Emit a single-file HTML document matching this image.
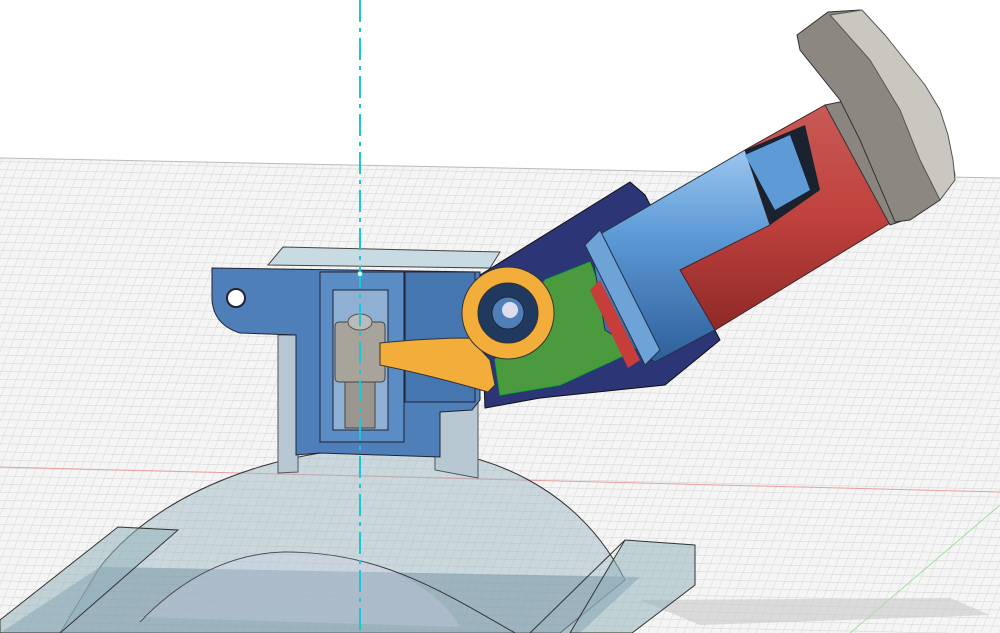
<!DOCTYPE html>
<html><head><style>
html,body{margin:0;padding:0;background:#fff;}
svg{display:block}
</style></head><body>
<svg width="1000" height="633" viewBox="0 0 1000 633" xmlns="http://www.w3.org/2000/svg">
<defs>
<pattern id="g" width="9" height="8" patternUnits="userSpaceOnUse" patternTransform="skewX(-20) rotate(1.2)">
<rect width="9" height="8" fill="#f5f5f5"/>
<path d="M0 0H9M0 0V8" stroke="#d4d4d4" stroke-width="1"/>
</pattern>
<linearGradient id="blue" x1="0" y1="0" x2="0" y2="1">
<stop offset="0" stop-color="#9cc6ee"/><stop offset="0.4" stop-color="#5d9ad6"/><stop offset="1" stop-color="#2f5f9a"/>
</linearGradient>
<linearGradient id="red" x1="0" y1="0" x2="0" y2="1">
<stop offset="0" stop-color="#c85a55"/><stop offset="0.5" stop-color="#c0413d"/><stop offset="1" stop-color="#8e2a28"/>
</linearGradient>
</defs>
<polygon points="0,158 1000,178 1000,633 0,633" fill="url(#g)"/>
<line x1="0" y1="158" x2="1000" y2="178" stroke="#bbb"/>
<line x1="0" y1="467" x2="1000" y2="492" stroke="#e8a0a0" stroke-width="1"/>
<line x1="850" y1="633" x2="1000" y2="505" stroke="#9fe09f" stroke-width="1"/>
<polygon points="640,600 950,598 990,615 700,625" fill="#c8c8c8" opacity="0.6"/>
<!-- dome -->
<path d="M100,567 C160,490 280,448 390,447 C490,447 580,490 625,580 L560,633 L60,633 Z" fill="rgba(150,180,190,0.45)" stroke="#333" stroke-width="1"/>
<!-- plate surface -->
<polygon points="0,633 100,567 640,577 580,633" fill="rgba(120,150,165,0.55)"/>
<path d="M140,622 C190,570 240,553 285,552 C380,552 440,590 515,633" fill="none" stroke="#333"/>
<path d="M140,622 C190,570 240,553 285,552 C380,552 440,590 460,627 L140,617Z" fill="rgba(200,205,225,0.35)"/>
<!-- slabs -->
<polygon points="0,620 118,527 178,530 75,620 60,633 0,633" fill="rgba(150,180,190,0.55)" stroke="#333"/>
<polygon points="625,540 695,545 695,585 632,633 570,633" fill="rgba(150,180,190,0.55)" stroke="#333"/>
<line x1="625" y1="540" x2="530" y2="633" stroke="#333"/>
<!-- housing translucent back -->
<polygon points="278,335 298,335 298,472 278,473" fill="#b7c8d3" stroke="#555"/>
<polygon points="435,405 478,400 478,478 435,470" fill="#b7c8d3" stroke="#555"/>
<polygon points="283,247 500,252 490,268 268,265" fill="#c8dbe3" stroke="#444"/>
<!-- blue housing -->
<path d="M212,268 L480,272 L480,400 L472,410 L440,412 L440,457 L320,453 L296,455 L296,335 L240,333 Q214,325 212,300Z" fill="#4f7fb8" stroke="#223" stroke-width="1"/>
<circle cx="236" cy="298" r="9" fill="#fff" stroke="#223" stroke-width="2"/>
<rect x="320" y="272" width="84" height="170" fill="#5a8cc6" stroke="#223"/>
<rect x="333" y="290" width="55" height="140" fill="#8fb0d2" stroke="#223"/>
<rect x="405" y="272" width="70" height="130" fill="#4576b0" stroke="#223"/>
<rect x="345" y="380" width="30" height="48" fill="#9a958e" stroke="#444"/>
<rect x="335" y="322" width="50" height="60" rx="4" fill="#a8a39b" stroke="#444"/>
<ellipse cx="360" cy="322" rx="12" ry="8" fill="#bbb" stroke="#555"/>
<!-- navy bracket -->
<polygon points="480,275 630,182 645,195 720,340 665,385 540,398 485,408" fill="#2c3576" stroke="#111"/>
<polygon points="545,280 590,262 625,355 560,385 500,395 495,360" fill="#4b9a3d" stroke="#1a3"/>
<!-- orange lever -->
<path d="M380,343 Q430,338 470,338 L490,360 L495,385 L488,392 Q430,375 380,365Z" fill="#f2ad3a" stroke="#333"/>
<circle cx="508" cy="313" r="46" fill="#f2ad3a" stroke="#333"/>
<circle cx="508" cy="313" r="30" fill="#1f3a5e" stroke="#333"/>
<circle cx="508" cy="313" r="16" fill="#4f7fb8" stroke="#223"/>
<circle cx="510" cy="310" r="8" fill="#dde" />
<!-- blue cylinder -->
<polygon points="590,240 745,150 790,215 700,295 715,330 655,362 605,330" fill="url(#blue)" stroke="#234"/>
<polygon points="585,245 600,230 660,350 645,365" fill="#6ea3d8" stroke="#234"/>
<polygon points="590,290 600,280 640,360 628,368" fill="#c63d3a"/>
<!-- red cylinder -->
<polygon points="680,270 770,225 745,150 825,105 895,220 715,330" fill="url(#red)" stroke="#422"/>
<polygon points="770,225 745,150 805,125 820,190" fill="#1a2230"/>
<polygon points="745,155 790,135 810,190 775,210" fill="#5d9ad6"/>
<!-- cap and gear -->
<polygon points="825,105 850,100 905,220 890,225" fill="#8a857e" stroke="#333"/>
<path d="M797,35 L828,12 L860,10 L880,30 L895,50 L910,70 L925,90 L935,110 L945,130 L950,150 L955,175 L940,200 L910,220 L895,222 L860,140 L840,100 L800,50Z" fill="#8c8780" stroke="#333"/>
<path d="M830,15 L862,10 L885,35 L905,60 L925,85 L940,110 L948,135 L953,160 L955,180 L940,200 L920,160 L900,110 L870,60Z" fill="#c9c7c0" stroke="#555"/>
<line x1="360" y1="0" x2="360" y2="633" stroke="#19c8d6" stroke-width="2" stroke-dasharray="22,6,4,6"/>
<circle cx="360" cy="274" r="2.5" fill="#fff" stroke="#19c8d6"/>
</svg>
</body></html>
